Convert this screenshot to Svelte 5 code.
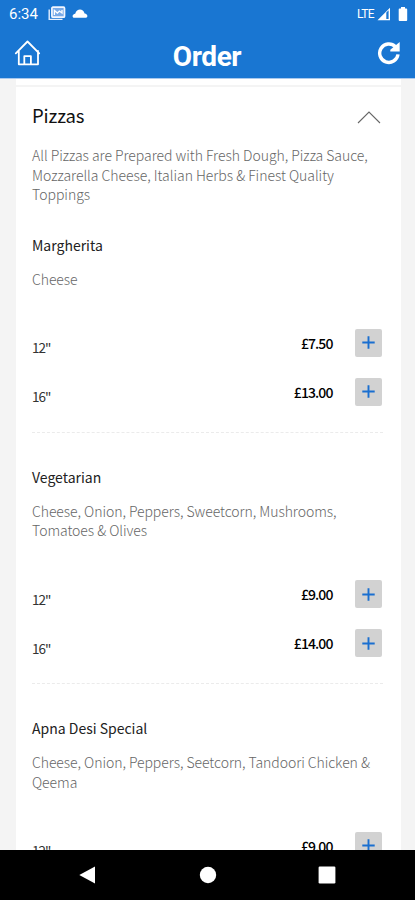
<script>
  let open = true;

  const items = [
    {
      name: "Margherita",
      desc: ["Cheese"],
      sizes: [
        { label: '12"', price: 7.5 },
        { label: '16"', price: 13 },
      ],
    },
    {
      name: "Vegetarian",
      desc: [
        "Cheese, Onion, Peppers, Sweetcorn, Mushrooms,",
        "Tomatoes & Olives",
      ],
      sizes: [
        { label: '12"', price: 9 },
        { label: '16"', price: 14 },
      ],
    },
    {
      name: "Apna Desi Special",
      desc: [
        "Cheese, Onion, Peppers, Seetcorn, Tandoori Chicken &",
        "Qeema",
      ],
      sizes: [{ label: '12"', price: 9 }],
    },
  ];
</script>

<div class="phone">
  <header>
    <div class="status">
      <span class="time">6:34</span>
      <svg class="news" width="18" height="15" viewBox="0 0 18 15">
        <path d="M1.2 3.5V13.4H14.5" fill="none" stroke="#e6efff" stroke-width="1.4" />
        <rect x="3.9" y="1.2" width="12.6" height="10" rx="1" fill="#78aae8" stroke="#f1f6ff" stroke-width="1.7" />
        <path d="M6.4 9V4.4l3 2.6 2-2 2.6 2V4" fill="none" stroke="#fff" stroke-width="1.3" />
      </svg>
      <svg class="cloud" width="16" height="9" viewBox="0 0 16 9">
        <path d="M2.2 8.8C-.3 8.4.2 5.2 3.2 4.8 4 1.600 6 .4 8 .4s4 1.400 4.600 4c3 .2 3.800 3.800 1.400 4.400z" fill="#fff" />
      </svg>
      <span class="lte">LTE</span>
      <svg class="signal" width="14" height="14" viewBox="0 0 14 14">
        <path d="M.5 13.2 13 .7v12.5z" fill="#fff" />
        <path d="M9.3 5.6 11.6 3.3v8.6H9.3z" fill="#1976d2" />
      </svg>
      <svg class="battery" width="10" height="14" viewBox="0 0 10 14">
        <path d="M3 0h4v1.5h1.3q.9 0 .9.9v10.7q0 .9-.9.9H1.6q-.9 0-.9-.9V2.4q0-.9.9-.9H3z" fill="#fff" />
      </svg>
    </div>
    <div class="bar">
      <svg width="28" height="28" viewBox="0 0 28 28">
        <path
          d="M2.8 14.3 14.5 2.5 26.2 14.3M5.8 12v13.3H25V12M11.3 25v-7.8h6.6V25"
          fill="none"
          stroke="#fff"
          stroke-width="1.8"
          stroke-linejoin="round"
          stroke-linecap="round"
        />
      </svg>
      <h1>Order</h1>
      <svg width="24" height="24" viewBox="0 0 24 24">
        <path d="M21 13.4a9.2 9.2 0 1 1-2.6-7.7" fill="none" stroke="#fff" stroke-width="3.4" />
        <path d="M22.7 1v9.4h-9.4V8.8z" fill="#fff" />
      </svg>
    </div>
  </header>

  <main>
    <div class="prev"></div>
    <section>
      <button class="head" aria-label="Toggle Pizzas" on:click={() => (open = !open)}>
        <h2>Pizzas</h2>
        <svg width="24" height="14" viewBox="0 0 24 14">
          <path d="M1 13 12 2l11 11" fill="none" stroke="#666" stroke-width="1.1" />
        </svg>
      </button>
      {#if open}
        <p class="desc">
          All Pizzas are Prepared with Fresh Dough, Pizza Sauce,<br />
          Mozzarella Cheese, Italian Herbs &amp; Finest Quality<br />
          Toppings
        </p>
        {#each items as item (item.name)}
          <article>
            <h3>{item.name}</h3>
            <p class="desc">
              {#each item.desc as line}
                <span>{line}</span>
              {/each}
            </p>
            <!-- sizes -->
            <div class="sizes">
              {#each item.sizes as size}
                <div class="row">
                  <span class="label">{size.label}</span>
                  <span class="price">£{size.price.toFixed(2)}</span>
                  <button class="add" aria-label="Add">
                    <svg width="13" height="13" viewBox="0 0 13 13">
                      <path d="M6.5 .3v12.4M.3 6.5h12.4" stroke="#1a6fd0" stroke-width="1.9" />
                    </svg>
                  </button>
                </div>
              {/each}
            </div>
          </article>
        {/each}
      {/if}
    </section>
  </main>

  <nav>
    <svg width="18" height="18" viewBox="0 0 18 18">
      <path d="M.3 9 16 .6v16.8z" fill="#fff" />
    </svg>
    <svg width="18" height="18" viewBox="0 0 18 18">
      <circle cx="9" cy="9" r="8.2" fill="#fff" />
    </svg>
    <svg width="18" height="18" viewBox="0 0 18 18">
      <rect x=".6" y=".6" width="16.8" height="16.8" rx="1.2" fill="#fff" />
    </svg>
  </nav>
</div>

<style>
  .phone {
    display: flex;
    flex-direction: column;
    height: 900px;
    overflow: hidden;
    background: #f4f4f4;
    font-family: "Noto Sans CJK SC", "Noto Sans", sans-serif;
  }
  h1,
  h2,
  h3,
  p {
    margin: 0;
  }
  button {
    border: 0;
    padding: 0;
    font: inherit;
  }
  svg {
    display: block;
    flex: none;
  }
  header {
    flex: none;
    height: 78px;
    background: #1976d2;
    border-bottom: 1px solid #a9c9ee;
    color: #fff;
    font-family: Roboto, sans-serif;
  }
  .status {
    display: flex;
    align-items: center;
    height: 27px;
    padding: 0 7px 0 9px;
  }
  .time {
    width: 39px;
    font-size: 15px;
  }
  .cloud {
    margin-left: 6px;
  }
  .lte {
    margin-left: auto;
    font-size: 12px;
    letter-spacing: -0.6px;
  }
  .signal {
    margin: 0 7px 0 3px;
  }
  .bar {
    display: flex;
    align-items: center;
    justify-content: space-between;
    height: 51px;
    padding: 0 14px 0 13px;
  }
  h1 {
    padding: 8px 4px 0 0;
    font-size: 28px;
    font-weight: 700;
    line-height: 32px;
    letter-spacing: -0.4px;
  }
  main {
    flex: 1;
    min-height: 0;
    overflow: hidden;
    padding: 0 14px 0 16px;
  }
  .prev {
    height: 6px;
    background: #fff;
  }
  section {
    border-top: 2px solid #f4f4f4;
    padding: 0 18px 0 16px;
    background: #fff;
  }
  .head {
    display: flex;
    align-items: center;
    justify-content: space-between;
    width: 100%;
    height: 59px;
    padding-right: 2px;
    background: none;
    color: #111;
  }
  h2 {
    padding-bottom: 4px;
    font-size: 18.5px;
    font-weight: 400;
    letter-spacing: -0.1px;
  }
  .desc {
    color: #666;
    font-size: 14px;
    font-weight: 300;
    line-height: 19.5px;
    letter-spacing: -0.03px;
    white-space: nowrap;
  }
  .desc span {
    display: block;
    letter-spacing: -0.06px;
  }
  article {
    padding: 30px 0 26px;
    border-bottom: 1px dashed #ebebeb;
  }
  article + article {
    padding-top: 34.2px;
  }
  h3 {
    margin-bottom: 15px;
    color: #222;
    font-size: 14px;
    font-weight: 400;
    line-height: 20px;
  }
  .sizes {
    display: flex;
    flex-direction: column;
    gap: 21px;
    padding-top: 39.5px;
  }
  .row {
    display: flex;
    align-items: center;
    height: 28px;
  }
  .label {
    flex: 1;
    padding-top: 9px;
    color: #333;
    font-size: 13.5px;
    letter-spacing: -1px;
  }
  .price {
    margin-right: 22.5px;
    color: #000;
    font-size: 14px;
    font-weight: 500;
    letter-spacing: -0.9px;
  }
  .add {
    display: flex;
    align-items: center;
    justify-content: center;
    width: 27px;
    height: 28px;
    margin-right: 1px;
    border-radius: 2px;
    background: #d2d2d2;
  }
  nav {
    flex: none;
    display: flex;
    justify-content: space-between;
    align-items: center;
    height: 50px;
    padding: 0 79px;
    background: #000;
  }
</style>
